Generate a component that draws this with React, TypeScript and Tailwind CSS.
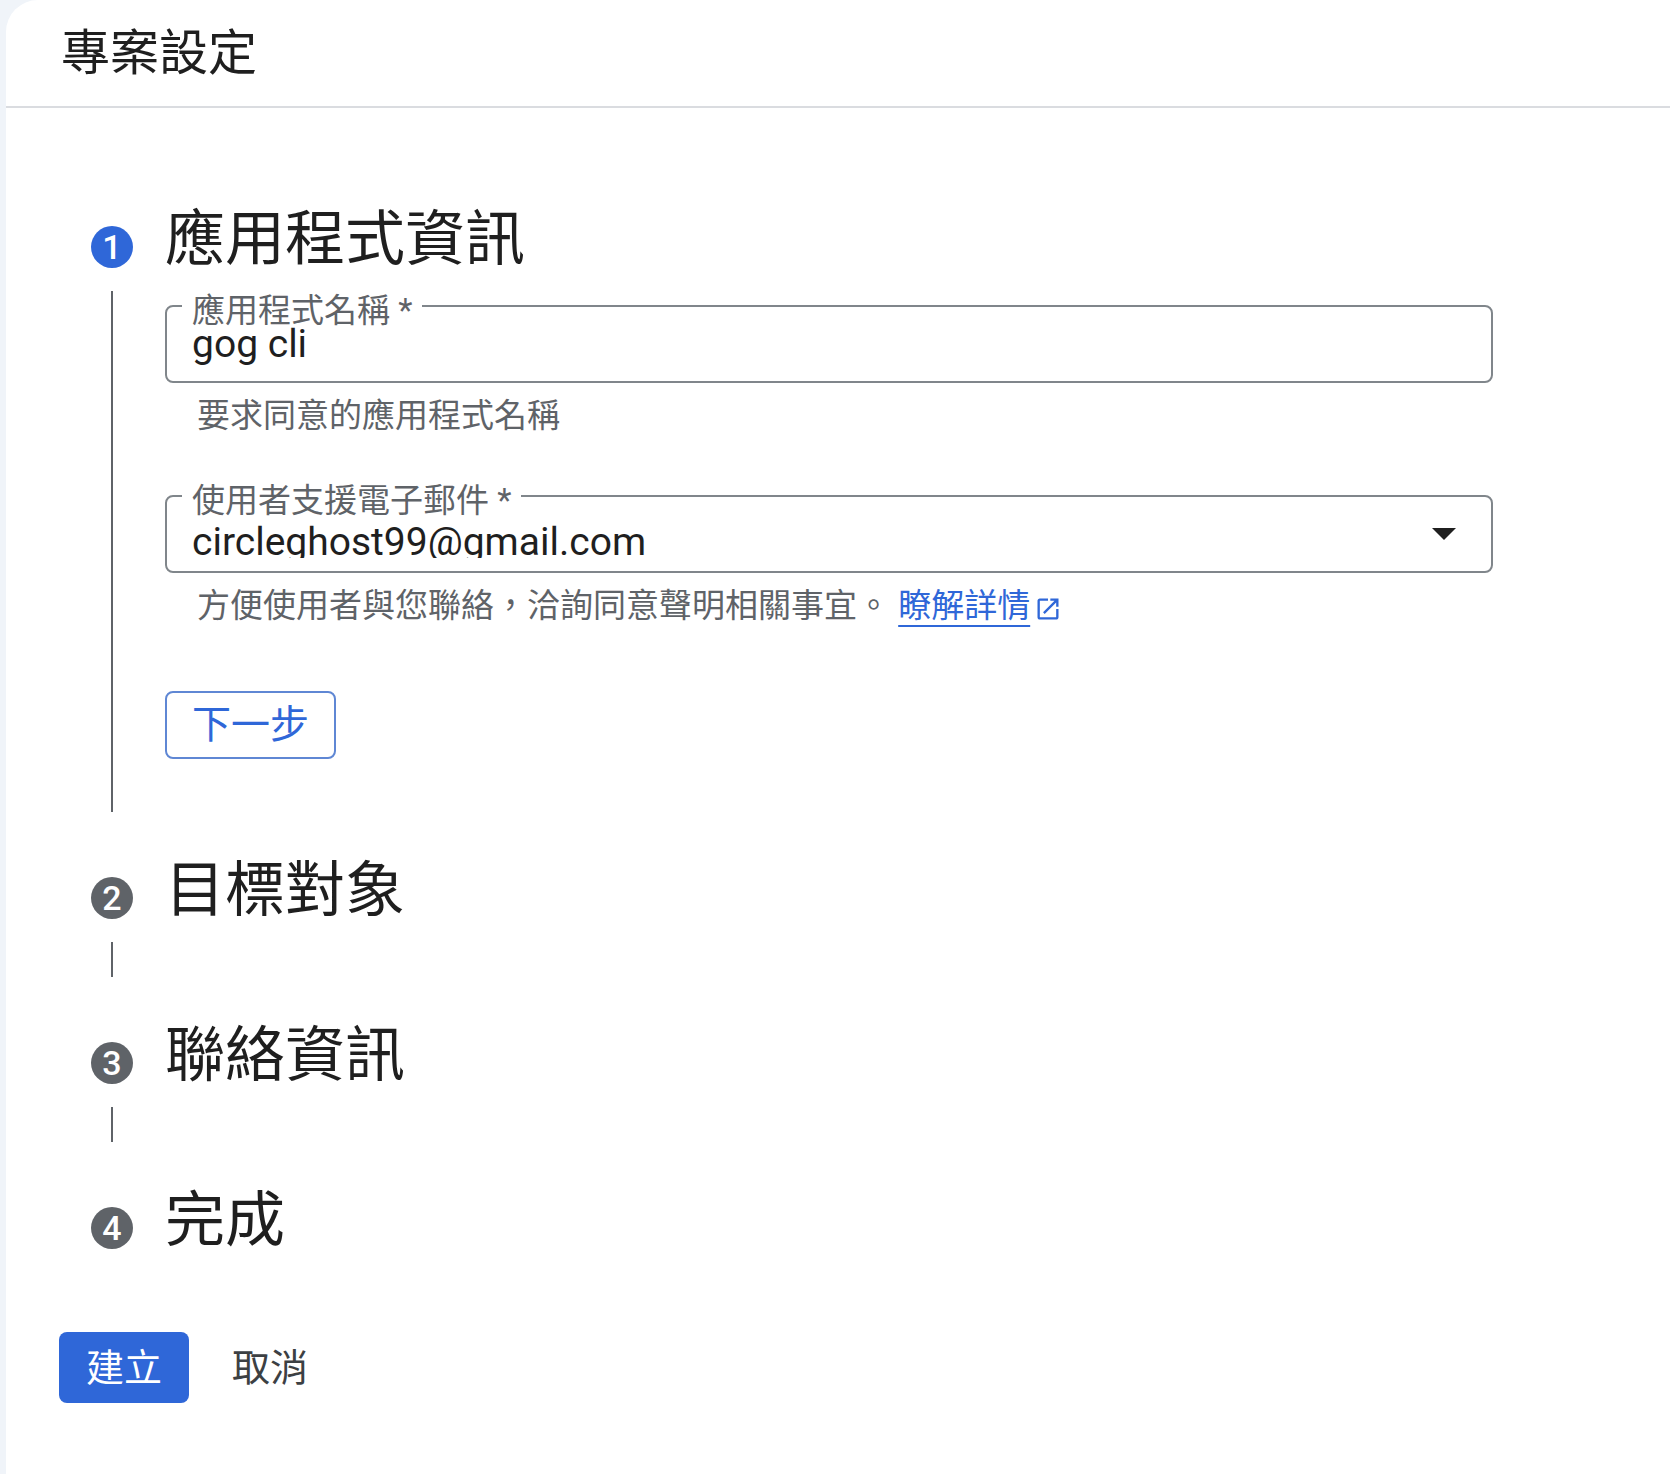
import type { ReactNode } from "react";

const steps = [
  { n: 1, title: "應用程式資訊" },
  { n: 2, title: "目標對象" },
  { n: 3, title: "聯絡資訊" },
  { n: 4, title: "完成" },
];

function StepBadge({ n, active }: { n: number; active?: boolean }) {
  return (
    <div
      className={
        "mt-[20px] flex h-[42px] w-[42px] shrink-0 items-center justify-center rounded-full text-[34px] font-medium leading-none text-white " +
        (active ? "bg-[#2f67d8]" : "bg-[#5f6368]")
      }
    >
      {n}
    </div>
  );
}

function Outlined({ label, children }: { label: string; children: ReactNode }) {
  return (
    <div className="relative flex h-[78px] w-[1328px] rounded-[8px] border-2 border-[#80868b]">
      <span className="absolute left-[15px] top-[-13px] bg-white px-[10px] text-[33px] leading-[33px] text-[#5f6368]">
        {label}
      </span>
      {children}
    </div>
  );
}

function OpenInNew() {
  return (
    <svg viewBox="0 0 24 24" className="ml-[4px] inline-block h-[28px] w-[28px] align-[-6px]" fill="#2f67d8">
      <path d="M19 19H5V5h7V3H5c-1.11 0-2 .9-2 2v14c0 1.1.89 2 2 2h14c1.1 0 2-.9 2-2v-7h-2v7zM14 3v2h3.59l-9.83 9.83 1.41 1.41L19 6.41V10h2V3h-7z" />
    </svg>
  );
}

function AppInfoForm() {
  return (
    <div className="pt-[39px] pb-[98px]">
      <Outlined label="應用程式名稱 *">
        <div className="pl-[25px] pt-[15px] text-[39px] leading-[44px] text-[#1f1f1f]">gog cli</div>
      </Outlined>
      <p className="mt-[16px] pl-[32px] text-[33px] leading-[33px] text-[#5f6368]">要求同意的應用程式名稱</p>

      <div className="mt-[63px]">
        <Outlined label="使用者支援電子郵件 *">
          <div className="flex-1 pl-[25px] pt-[23px]">
            <div className="h-[38px] overflow-hidden text-[39px] leading-[44px] text-[#1f1f1f]">
              circleghost99@gmail.com
            </div>
          </div>
          <svg viewBox="0 0 24 12" className="mr-[35px] h-[12px] w-[24px] self-center" fill="#1f1f1f">
            <polygon points="0,0 24,0 12,12" />
          </svg>
        </Outlined>
      </div>
      <p className="mt-[16px] pl-[32px] text-[33px] leading-[33px] text-[#5f6368]">
        方便使用者與您聯絡，洽詢同意聲明相關事宜。{" "}
        <a className="text-[#2f67d8] underline decoration-2 underline-offset-[8px]">瞭解詳情</a>
        <OpenInNew />
      </p>

      <button className="mt-[68px] h-[68px] rounded-[8px] border-2 border-[#5f87d4] px-[25px] text-[39px] leading-none text-[#2f67d8]">
        下一步
      </button>
    </div>
  );
}

export default function App() {
  return (
    <div className="min-h-screen bg-[#f0f4f9] font-[Roboto,'Noto_Sans_CJK_TC',sans-serif]">
      <div className="ml-[6px] min-h-screen rounded-tl-[32px] bg-white">
        <header className="flex h-[108px] items-center border-b-2 border-[#dadce0] pl-[55px]">
          <h1 className="text-[49px] leading-[49px] text-[#1f1f1f]">專案設定</h1>
        </header>

        <div className="pl-[85px] pt-[98px]">
          {steps.map((s) => {
            const active = s.n === 1;
            const last = s.n === steps.length;
            return (
              <div key={s.n} className="grid grid-cols-[42px_1fr] gap-x-[32px]">
                {/* badge column keeps the heading row at 60px; the circle sits a little lower */}
                <div className="flex h-[60px] justify-center">
                  <StepBadge n={s.n} active={active} />
                </div>
                <h2 className="h-[60px] pt-[4px] text-[60px] leading-[60px] text-[#1f1f1f]">{s.title}</h2>

                {!last && (
                  <>
                    <div className="flex flex-col items-center pt-[25px] pb-[45px]">
                      <div className={"w-[2px] bg-[#5f6368] " + (active ? "flex-1" : "h-[35px]")} />
                    </div>
                    <div>{active && <AppInfoForm />}</div>
                  </>
                )}
              </div>
            );
          })}
        </div>

        <div className="mt-[85px] flex items-center gap-[16px] pl-[53px]">
          <button className="h-[71px] rounded-[8px] bg-[#2f67d8] px-[27px] text-[38px] leading-none text-white">
            建立
          </button>
          <button className="h-[71px] rounded-[8px] px-[27px] text-[38px] leading-none text-[#3c4043]">
            取消
          </button>
        </div>
      </div>
    </div>
  );
}
